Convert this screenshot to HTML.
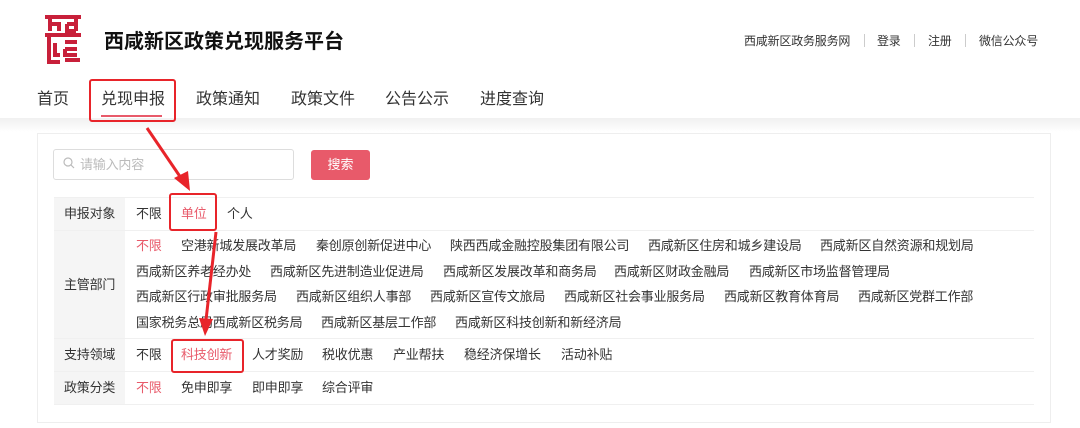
<!DOCTYPE html>
<html><head><meta charset="utf-8"><style>
*{margin:0;padding:0;box-sizing:border-box}
body{width:1080px;height:428px;background:#fff;position:relative;overflow:hidden;font-family:"Liberation Sans","Noto Sans CJK SC",sans-serif;color:#333}
.a{position:absolute;white-space:nowrap}
.t{font-size:13px;line-height:16px;color:#333;letter-spacing:-0.2px}
.r{color:#e85a6a}
.nav{font-size:16px;line-height:20px;color:#333}
.box{position:absolute;border:2px solid #e8242a;border-radius:3px}
.line{position:absolute;left:54px;width:980px;height:1px;background:#f0f0f0}
</style></head><body>
<div class="a" style="left:0;top:118px;width:1080px;height:14px;background:linear-gradient(#f0f0f0,#fff)"></div>
<svg class="a" style="left:44px;top:14px" width="38" height="50" viewBox="0 0 38 50" fill="none" stroke="#c8203a" stroke-width="4">
<path d="M1 3H37M6 3V17M32 3V17M6 10H15V17M23 10H32M23 10V17H32M1 21H37M5 23V48H16M11 29V41H16M21 28H33M21 35H33M21 35V41H33M21 46H36"/>
</svg>
<div class="a" style="left:104px;top:30px;font-size:20px;font-weight:bold;color:#111;line-height:24px">西咸新区政策兑现服务平台</div>
<div class="a t" style="left:744px;top:33px;font-size:12px">西咸新区政务服务网</div>
<div class="a" style="left:864px;top:34px;width:1px;height:13px;background:#ccc"></div>
<div class="a t" style="left:877px;top:33px;font-size:12px">登录</div>
<div class="a" style="left:914px;top:34px;width:1px;height:13px;background:#ccc"></div>
<div class="a t" style="left:928px;top:33px;font-size:12px">注册</div>
<div class="a" style="left:965px;top:34px;width:1px;height:13px;background:#ccc"></div>
<div class="a t" style="left:979px;top:33px;font-size:12px">微信公众号</div>
<div class="a nav" style="left:37px;top:90px">首页</div>
<div class="a nav r" style="left:101px;top:90px">兑现申报</div>
<div class="a" style="left:101px;top:115px;width:61px;height:2px;background:#e85a6a"></div>
<div class="a nav" style="left:196px;top:90px">政策通知</div>
<div class="a nav" style="left:291px;top:90px">政策文件</div>
<div class="a nav" style="left:385px;top:90px">公告公示</div>
<div class="a nav" style="left:480px;top:90px">进度查询</div>
<div class="box" style="left:89px;top:79px;width:87px;height:43px"></div>

<div class="a" style="left:37px;top:133px;width:1014px;height:290px;border:1px solid #eee;background:#fff"></div>
<div class="a" style="left:53px;top:149px;width:241px;height:31px;border:1px solid #ddd;border-radius:3px"></div>
<svg class="a" style="left:63px;top:157px" width="12" height="12" viewBox="0 0 12 12" fill="none" stroke="#bbb" stroke-width="1.2"><circle cx="5" cy="5" r="4"/><path d="M8 8L11 11"/></svg>
<div class="a t" style="left:80px;top:157px;color:#bbb">请输入内容</div>
<div class="a" style="left:311px;top:150px;width:59px;height:30px;background:#e85a6a;border-radius:3px;color:#fff;font-size:13px;line-height:30px;text-align:center">搜索</div>

<div class="a" style="left:54px;top:197px;width:71px;height:207px;background:#f5f5f5"></div>
<div class="line" style="top:197px"></div><div class="line" style="top:230px"></div><div class="line" style="top:338px"></div><div class="line" style="top:371px"></div><div class="line" style="top:404px"></div>

<div class="a t" style="left:64px;top:206px">申报对象</div>
<div class="a t" style="left:64px;top:277px">主管部门</div>
<div class="a t" style="left:64px;top:347px">支持领域</div>
<div class="a t" style="left:64px;top:380px">政策分类</div>

<div class="a t" style="left:136px;top:206px">不限</div>
<div class="a t r" style="left:181px;top:206px">单位</div>
<div class="a t" style="left:227px;top:206px">个人</div>

<div class="a t r" style="left:136px;top:238px">不限</div>
<div class="a t" style="left:181px;top:238px">空港新城发展改革局</div>
<div class="a t" style="left:316px;top:238px">秦创原创新促进中心</div>
<div class="a t" style="left:450px;top:238px">陕西西咸金融控股集团有限公司</div>
<div class="a t" style="left:648px;top:238px">西咸新区住房和城乡建设局</div>
<div class="a t" style="left:820px;top:238px">西咸新区自然资源和规划局</div>

<div class="a t" style="left:136px;top:264px">西咸新区养老经办处</div>
<div class="a t" style="left:270px;top:264px">西咸新区先进制造业促进局</div>
<div class="a t" style="left:443px;top:264px">西咸新区发展改革和商务局</div>
<div class="a t" style="left:614px;top:264px">西咸新区财政金融局</div>
<div class="a t" style="left:749px;top:264px">西咸新区市场监督管理局</div>

<div class="a t" style="left:136px;top:289px">西咸新区行政审批服务局</div>
<div class="a t" style="left:296px;top:289px">西咸新区组织人事部</div>
<div class="a t" style="left:430px;top:289px">西咸新区宣传文旅局</div>
<div class="a t" style="left:564px;top:289px">西咸新区社会事业服务局</div>
<div class="a t" style="left:724px;top:289px">西咸新区教育体育局</div>
<div class="a t" style="left:858px;top:289px">西咸新区党群工作部</div>

<div class="a t" style="left:136px;top:315px">国家税务总局西咸新区税务局</div>
<div class="a t" style="left:321px;top:315px">西咸新区基层工作部</div>
<div class="a t" style="left:455px;top:315px">西咸新区科技创新和新经济局</div>

<div class="a t" style="left:136px;top:347px">不限</div>
<div class="a t r" style="left:181px;top:347px">科技创新</div>
<div class="a t" style="left:252px;top:347px">人才奖励</div>
<div class="a t" style="left:322px;top:347px">税收优惠</div>
<div class="a t" style="left:393px;top:347px">产业帮扶</div>
<div class="a t" style="left:464px;top:347px">稳经济保增长</div>
<div class="a t" style="left:561px;top:347px">活动补贴</div>

<div class="a t r" style="left:136px;top:380px">不限</div>
<div class="a t" style="left:181px;top:380px">免申即享</div>
<div class="a t" style="left:252px;top:380px">即申即享</div>
<div class="a t" style="left:322px;top:380px">综合评审</div>

<div class="box" style="left:169px;top:193px;width:48px;height:38px"></div>
<div class="box" style="left:171px;top:339px;width:73px;height:34px"></div>

<svg class="a" style="left:0;top:0" width="1080" height="428">
<path d="M147 128L181 178" stroke="#e8242a" stroke-width="3" fill="none"/>
<path d="M174 178L190 191L188 171Z" fill="#e8242a"/>
<path d="M216 232L206 320" stroke="#e8242a" stroke-width="3" fill="none"/>
<path d="M199 318L205 336L213 319Z" fill="#e8242a"/>
</svg>
</body></html>
